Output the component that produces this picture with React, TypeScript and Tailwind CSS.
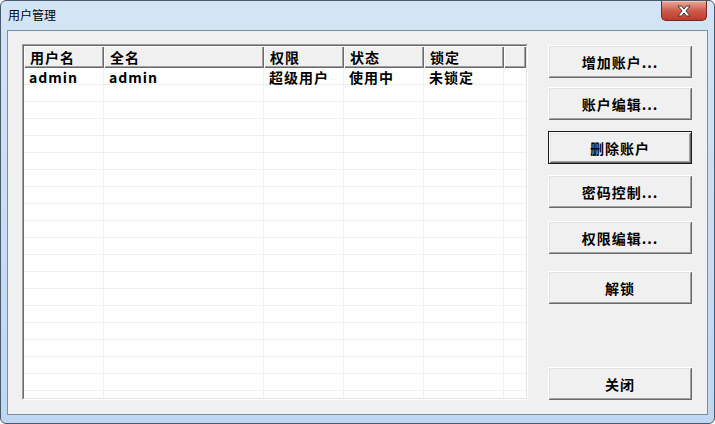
import React from "react";

const cols = [
  { title: "用户名", w: "w-[80px]" },
  { title: "全名", w: "w-[160px]" },
  { title: "权限", w: "w-[80px]" },
  { title: "状态", w: "w-[80px]" },
  { title: "锁定", w: "w-[80px]" },
];

const users = [["admin", "admin", "超级用户", "使用中", "未锁定"]];

const buttons = [
  { label: "增加账户...", gap: "mt-[1px]" },
  { label: "账户编辑...", gap: "mt-[9px]" },
  { label: "删除账户", gap: "mt-[11px]", isDefault: true },
  { label: "密码控制...", gap: "mt-[11px]" },
  { label: "权限编辑...", gap: "mt-[13px]" },
  { label: "解锁", gap: "mt-[17px]" },
  { label: "关闭", gap: "mt-[63px]" },
];

const font = "font-['SimSun','Noto_Sans_CJK_SC',sans-serif]";

function WinButton({ label, isDefault }: { label: string; isDefault?: boolean }) {
  return (
    <div
      className={
        isDefault
          ? "h-[33px] w-[144px] border border-[#1a1a1a] bg-[#f0f0f0]"
          : "h-[33px] w-[144px] bg-[#f0f0f0]"
      }
    >
      <div className="flex h-full w-full items-center justify-center bg-[#f0f0f0] shadow-[inset_1px_1px_#ffffff,inset_-1px_-1px_#696969,inset_2px_2px_#e3e3e3,inset_-2px_-2px_#a0a0a0]">
        <span className={`${font} text-[14px] leading-none font-bold tracking-[1px] text-black`}>
          {label}
        </span>
      </div>
    </div>
  );
}

function CloseButton() {
  return (
    <div className="flex h-[20px] w-[46px] items-center justify-center rounded-b-[5px] border border-t-0 border-[#6e2a22] bg-gradient-to-b from-[#e9a99c] via-[#cf5b4a] to-[#c0392b] shadow-[inset_0_1px_0_rgba(255,255,255,0.35)]">
      <svg width="16" height="12" viewBox="0 0 16 12">
        <path
          d="M2 1h3.5L8 4l2.5-3H14l-4 5 4 5h-3.5L8 8l-2.5 3H2l4-5z"
          fill="#ffffff"
          stroke="#3a3a3a"
          strokeWidth="1"
          strokeLinejoin="round"
        />
      </svg>
    </div>
  );
}

export default function App() {
  const rows = Array.from({ length: 20 }, (_, i) => users[i] ?? ["", "", "", "", ""]);

  return (
    <div className="h-[424px] w-[715px] bg-white">
      <div className="flex h-full w-full flex-col overflow-hidden rounded-[6px] border border-[#4b5a6b] bg-gradient-to-b from-[#d3e4f6] to-[#bfd7f1]">
        {/* title bar */}
        <div className="flex h-[29px] shrink-0 items-start justify-between pl-[7px] pr-[7px]">
          <span className="mt-[7px] font-['Noto_Sans_CJK_SC',sans-serif] text-[12px] leading-[14px] text-black">
            用户管理
          </span>
          <CloseButton />
        </div>

        {/* client area */}
        <div className="mx-[6px] mb-[8px] flex flex-1 border border-[#7d8ea3] bg-[#f0f0f0] pl-[14px] pt-[13px]">
          {/* list view */}
          <div className="h-[356px] w-[506px] border border-t-[#a0a0a0] border-l-[#a0a0a0] border-r-white border-b-white">
            <div className="flex h-full w-full flex-col overflow-hidden border border-t-[#696969] border-l-[#696969] border-r-[#e3e3e3] border-b-[#e3e3e3] bg-white">
              <div className="flex h-[22px] shrink-0">
                {cols.map((c) => (
                  <div
                    key={c.title}
                    className={`${c.w} flex items-center bg-[#f0f0f0] pl-[6px] shadow-[inset_1px_1px_#ffffff,inset_-1px_-1px_#696969,inset_-2px_-2px_#a0a0a0]`}
                  >
                    <span className={`${font} text-[14px] leading-none font-bold tracking-[1px] text-black`}>
                      {c.title}
                    </span>
                  </div>
                ))}
                <div className="flex-1 bg-[#f0f0f0] shadow-[inset_1px_1px_#ffffff,inset_-1px_-1px_#696969,inset_-2px_-2px_#a0a0a0]" />
              </div>
              {rows.map((r, i) => (
                <div key={i} className="flex h-[17px] shrink-0 border-b border-[#f0f0f0]">
                  {cols.map((c, j) => (
                    <div
                      key={j}
                      className={`${c.w} flex items-center border-r border-[#f0f0f0] pl-[5px] pt-[1px]`}
                    >
                      <span className={`${font} text-[14px] leading-none font-bold tracking-[1px] text-black`}>
                        {r[j]}
                      </span>
                    </div>
                  ))}
                  <div className="flex-1" />
                </div>
              ))}
            </div>
          </div>

          {/* buttons */}
          <div className="ml-[20px] flex flex-col">
            {buttons.map((b) => (
              <div key={b.label} className={b.gap}>
                <WinButton label={b.label} isDefault={b.isDefault} />
              </div>
            ))}
          </div>
        </div>
      </div>
    </div>
  );
}
